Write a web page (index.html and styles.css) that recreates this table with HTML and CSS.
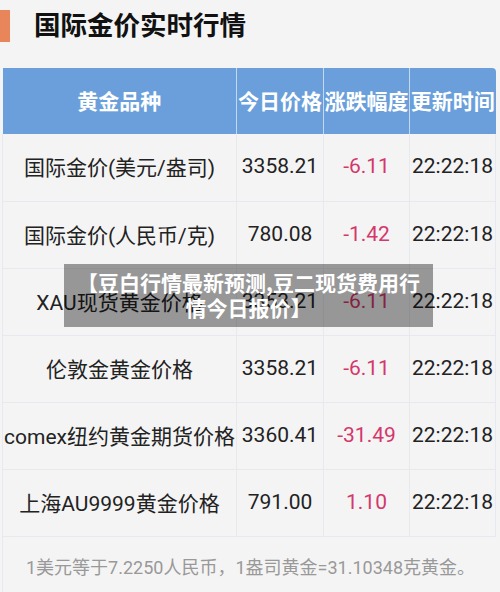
FILE: index.html
```html
<!DOCTYPE html>
<html lang="zh-CN">
<head>
    <meta charset="UTF-8">
    <meta name="viewport" content="width=device-width, initial-scale=1.0">
    <title>国际金价实时行情</title>
    <link rel="stylesheet" href="styles.css">
</head>
<body>
    <div class="page">
        <div class="title-bar">
            <span class="mark"></span>
            <h1>国际金价实时行情</h1>
        </div>

        <table class="quotes">
            <thead>
                <tr>
                    <th class="col-name">黄金品种</th>
                    <th>今日价格</th>
                    <th>涨跌幅度</th>
                    <th>更新时间</th>
                </tr>
            </thead>
            <tbody>
                <tr>
                    <td>国际金价(美元/盎司)</td>
                    <td>3358.21</td>
                    <td class="change">-6.11</td>
                    <td>22:22:18</td>
                </tr>
                <tr>
                    <td>国际金价(人民币/克)</td>
                    <td>780.08</td>
                    <td class="change">-1.42</td>
                    <td>22:22:18</td>
                </tr>
                <tr>
                    <td>XAU现货黄金价格</td>
                    <td>3353.21</td>
                    <td class="change">-6.11</td>
                    <td>22:22:18</td>
                </tr>
                <tr>
                    <td>伦敦金黄金价格</td>
                    <td>3358.21</td>
                    <td class="change">-6.11</td>
                    <td>22:22:18</td>
                </tr>
                <tr>
                    <td>comex纽约黄金期货价格</td>
                    <td>3360.41</td>
                    <td class="change">-31.49</td>
                    <td>22:22:18</td>
                </tr>
                <tr>
                    <td>上海AU9999黄金价格</td>
                    <td>791.00</td>
                    <td class="change">1.10</td>
                    <td>22:22:18</td>
                </tr>
                <tr>
                    <td class="note" colspan="4">1美元等于7.2250人民币，1盎司黄金=31.10348克黄金。</td>
                </tr>
            </tbody>
        </table>

        <div class="caption">【豆白行情最新预测,豆二现货费用行情今日报价】</div>
    </div>
</body>
</html>
```

FILE: styles.css
```css
* {
    margin: 0;
    padding: 0;
    box-sizing: border-box;
}

body {
    font-family: Roboto, "Noto Sans CJK SC", sans-serif;
    background-color: #f4f4f4;
    color: #222;
    width: 500px;
    height: 592px;
    overflow: hidden;
}

.page {
    position: relative;
    padding-top: 10px;
}

/* Title */
.title-bar {
    display: flex;
    align-items: center;
    height: 32px;
    gap: 24px;
}

.mark {
    width: 10px;
    height: 32px;
    background-color: #e8855b;
}

h1 {
    font-family: "Noto Sans CJK SC", sans-serif;
    font-size: 26.5px;
    font-weight: bold;
    color: #111;
    line-height: 32px;
    margin-top: -4px;
}

/* Table */
.quotes {
    margin: 26px 0 0 2px;
    width: 493px;
    border-collapse: collapse;
    table-layout: fixed;
}

.quotes th {
    background-color: #6a9fdb;
    color: #fff;
    font-family: "Noto Sans CJK SC", sans-serif;
    font-size: 21px;
    font-weight: bold;
    height: 66px;
    white-space: nowrap;
    border-left: 1px solid #c4d8f0;
    padding: 0 0 2px;
}

.quotes th:first-child {
    border-left: none;
}

.quotes th:last-child {
    border-top-right-radius: 4px;
}

.col-name {
    width: 234px;
}

.quotes th:nth-child(2) {
    width: 87px;
}

.quotes th:nth-child(3),
.quotes th:nth-child(4) {
    width: 86px;
}

.quotes td {
    height: 67px;
    font-size: 21px;
    text-align: center;
    white-space: nowrap;
    border: 1px solid #e6eaee;
    border-top: none;
    padding: 0 0 2px;
    color: #222;
}

.quotes td.change {
    color: #d4376b;
}

.quotes td.note {
    height: 64px;
    text-align: left;
    padding: 0 0 4px 23px;
    font-size: 18px;
    color: #999;
    border-right: none;
    border-bottom: none;
}

/* Overlay caption */
.caption {
    position: absolute;
    left: 64px;
    top: 264px;
    width: 369px;
    height: 63px;
    padding: 6px 10px;
    background-color: rgba(0, 0, 0, 0.38);
    color: #fff;
    font-family: "Noto Sans CJK SC", sans-serif;
    font-size: 21px;
    font-weight: bold;
    line-height: 25px;
    text-align: center;
}
```
